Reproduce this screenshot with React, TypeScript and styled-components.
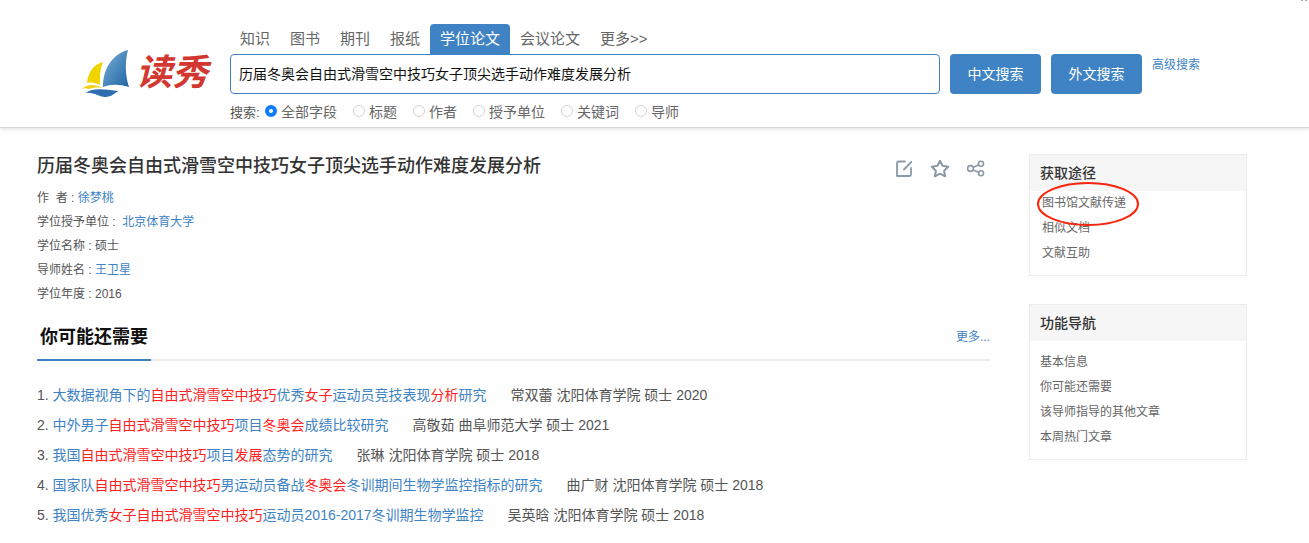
import React from "react";
import styled, { createGlobalStyle } from "styled-components";

const BLUE = "#4083c4";
const FONT = '"Liberation Sans", "Noto Sans CJK SC", sans-serif';

const GlobalStyle = createGlobalStyle`
  * { box-sizing: border-box; }
  body { margin: 0; background: #fefefe; color: #555; font-family: ${FONT}; font-size: 14px; }
  button, input { font-family: inherit; }
  h1, h2, p, ul, ol { margin: 0; padding: 0; }
  ul, ol { list-style: none; }
  a { color: inherit; text-decoration: none; }
`;

const Header = styled.header`
  position: relative;
  display: flex;
  align-items: flex-start;
  padding: 24px 109px 4px 80px;
  background: #fff;
  border-bottom: 1px solid #d6d6d6;
  box-shadow: 0 1px 4px rgba(0, 0, 0, 0.12);
`;
const ClippedMark = styled.svg`
  position: absolute;
  top: 0;
  right: 0;
`;
const Logo = styled.a`
  display: flex;
  flex: none;
  align-items: center;
  width: 150px;
  margin-top: 22px;
  color: #d2382f;
  font-size: 36px;
  font-weight: 700;
  font-style: italic;
  line-height: 54px;
`;
const Search = styled.form`
  flex: 1;
  min-width: 0;
`;
const Tabs = styled.nav`
  display: flex;
`;
const Tab = styled.a<{ $active?: boolean }>`
  padding: 0 10px;
  border-radius: 4px 4px 0 0;
  font-size: 15px;
  line-height: 30px;
  color: ${(p) => (p.$active ? "#fff" : "#666")};
  background: ${(p) => (p.$active ? BLUE : "transparent")};
`;
const SearchRow = styled.div`
  display: flex;
  gap: 10px;
`;
const SearchInput = styled.input`
  flex: 1;
  min-width: 0;
  height: 40px;
  padding: 0 8px 3px;
  border: 1px solid ${BLUE};
  border-radius: 4px;
  background: #fff;
  color: #111;
  font-size: 14px;
  outline: none;
`;
const SearchButton = styled.button`
  width: 91px;
  height: 40px;
  padding: 0 0 3px;
  border: 0;
  border-radius: 4px;
  background: ${BLUE};
  color: #fff;
  font-size: 14px;
`;
const Advanced = styled.a`
  color: ${BLUE};
  font-size: 12px;
  line-height: 22px;
`;
const Fields = styled.fieldset`
  display: flex;
  align-items: center;
  height: 24px;
  margin: 5px 0 0;
  padding: 0;
  border: 0;
`;
const FieldsLabel = styled.span`
  width: 35px;
  font-size: 13px;
`;
const FieldOption = styled.label`
  display: flex;
  align-items: center;
  gap: 4px;
  margin-right: 16px;
  color: #666;
  font-size: 14px;
`;
const Radio = styled.input`
  appearance: none;
  width: 12px;
  height: 12px;
  margin: 0;
  border: 1px solid #d2d2d2;
  border-radius: 50%;
  background: #fff;
  &:checked { border: 4px solid #0b7bff; }
`;

const Page = styled.div`
  display: grid;
  grid-template-columns: minmax(0, 1fr) 218px;
  gap: 39px;
  align-items: start;
  padding: 26px 62px 12px 37px;
`;
const TitleRow = styled.div`
  display: flex;
  align-items: center;
  justify-content: space-between;
  height: 24px;
  margin-bottom: 8px;
`;
const Title = styled.h1`
  color: #333;
  font-size: 18px;
  font-weight: 500;
  line-height: 24px;
`;
const Actions = styled.div`
  display: flex;
  gap: 16px;
  padding: 6px 4px 0 0;
`;
const IconButton = styled.button`
  display: flex;
  width: 20px;
  height: 20px;
  padding: 0;
  border: 0;
  background: none;
  color: #8d99a8;
`;
const Meta = styled.p`
  white-space: pre;
  font-size: 12px;
  line-height: 24px;
  a { color: ${BLUE}; }
`;
const SectionHead = styled.div`
  display: flex;
  justify-content: space-between;
  margin: 15px 0 19px;
  border-bottom: 2px solid #ececec;
`;
const SectionTitle = styled.h2`
  margin-bottom: -2px;
  padding: 0 3px 6px;
  border-bottom: 2px solid ${BLUE};
  color: #111;
  font-size: 18px;
  font-weight: 700;
  line-height: 32px;
`;
const More = styled.a`
  color: ${BLUE};
  font-size: 12px;
  line-height: 32px;
`;
const Result = styled.li`
  display: flex;
  gap: 24px;
  line-height: 30px;
  white-space: nowrap;
  a { color: ${BLUE}; }
  em { color: #f22; font-style: normal; }
`;

const Side = styled.aside`
  display: grid;
  gap: 28px;
`;
const Card = styled.section`
  border: 1px solid #ececec;
  background: #fff;
`;
const CardTitle = styled.h2`
  padding: 0 10px;
  background: #f6f6f6;
  color: #333;
  font-size: 14px;
  font-weight: 500;
  line-height: 36px;
`;
const CardList = styled.ul<{ $compact?: boolean }>`
  padding: ${(p) => (p.$compact ? "0 12px 9px" : "9px 10px 9px")};
  color: #666;
  font-size: 12px;
  line-height: 25px;
`;
const Circled = styled.a`
  position: relative;
  svg { position: absolute; left: -6px; top: -15px; pointer-events: none; }
`;

const Sailboat = () => (
  <svg width="56" height="54" viewBox="0 0 56 54" aria-hidden="true">
    <defs>
      <linearGradient id="sail" x1="0" y1="0" x2="1" y2="1">
        <stop offset="0" stopColor="#7db0d6" />
        <stop offset="1" stopColor="#1d64a4" />
      </linearGradient>
    </defs>
    <path d="M23 16C15 18 8 25 7 37c4-1 9 0 13 2 0-9 0-16 3-23z" fill="#f0d400" />
    <path d="M48 4C33 8 23 22 23 41c8-3 16-3 26 0C45 29 45 15 48 4z" fill="url(#sail)" />
    <path d="M2 43c5-5 12-5 21-1-6-1-11 0-14 1-3-1-5-1-7 0z" fill="#ecd21a" />
    <path d="M5 47c10-6 19-3 34-2-5 2-7 6-14 6-7 0-10-5-20-4z" fill="#2f6fb0" />
  </svg>
);

const stroke = { fill: "none", stroke: "currentColor", strokeWidth: 1.8, strokeLinecap: "round", strokeLinejoin: "round" } as const;
const EditIcon = () => (
  <svg width="20" height="20" viewBox="0 0 20 20" {...stroke}>
    <path d="M11 2.500H5Q3 2.500 3 4.500V17H15Q17 17 17 15V9M10 10.500L17.300 3" />
  </svg>
);
const StarIcon = () => (
  <svg width="20" height="20" viewBox="0 0 20 20" {...stroke} strokeWidth={2}>
    <path d="M10 1.800l2.500 5 5.700.9-4.100 4 1 5.600-5.100-2.600-5.100 2.600 1-5.600-4.100-4 5.700-.9z" />
  </svg>
);
const ShareIcon = () => (
  <svg width="20" height="20" viewBox="0 0 20 20" {...stroke} strokeWidth={1.6}>
    <circle cx="4.500" cy="9.500" r="2.900" />
    <circle cx="15" cy="4.800" r="2.500" />
    <circle cx="15" cy="14.200" r="2.500" />
    <path d="M7.200 8.300l5.400-2.400M7 11l5.600 2.300" />
  </svg>
);

const tabs = ["知识", "图书", "期刊", "报纸", "学位论文", "会议论文", "更多>>"];
const fields = ["全部字段", "标题", "作者", "授予单位", "关键词", "导师"];

/* Segments wrapped in asterisks are the matched keywords. */
const results = [
  ["大数据视角下的*自由式滑雪空中技巧*优秀*女子*运动员竞技表现*分析*研究", "常双蕾 沈阳体育学院 硕士 2020"],
  ["中外男子*自由式滑雪空中技巧*项目*冬奥会*成绩比较研究", "高敬茹 曲阜师范大学 硕士 2021"],
  ["我国*自由式滑雪空中技巧*项目*发展*态势的研究", "张琳 沈阳体育学院 硕士 2018"],
  ["国家队*自由式滑雪空中技巧*男运动员备战*冬奥会*冬训期间生物学监控指标的研究", "曲广财 沈阳体育学院 硕士 2018"],
  ["我国优秀*女子自由式滑雪空中技巧*运动员2016-2017冬训期生物学监控", "吴英晗 沈阳体育学院 硕士 2018"],
];
const navItems = ["基本信息", "你可能还需要", "该导师指导的其他文章", "本周热门文章"];

const Highlighted = ({ text }: { text: string }) => (
  <a href="#">{text.split("*").map((part, i) => (i % 2 ? <em key={i}>{part}</em> : part))}</a>
);

export default function App() {
  return (
    <>
      <GlobalStyle />
      <Header>
        <ClippedMark width="9" height="2" viewBox="0 0 9 2" aria-hidden="true">
          <path d="M1 0h2v1H1zM5 0h2v1H5z" fill="#aaa" />
        </ClippedMark>
        <Logo href="#"><Sailboat />读秀</Logo>
        <Search onSubmit={(e) => e.preventDefault()}>
          <Tabs>
            {tabs.map((t) => <Tab key={t} href="#" $active={t === "学位论文"}>{t}</Tab>)}
          </Tabs>
          <SearchRow>
            <SearchInput aria-label="搜索" defaultValue="历届冬奥会自由式滑雪空中技巧女子顶尖选手动作难度发展分析" />
            <SearchButton type="submit">中文搜索</SearchButton>
            <SearchButton type="button">外文搜索</SearchButton>
            <Advanced href="#">高级搜索</Advanced>
          </SearchRow>
          <Fields>
            <FieldsLabel>搜索:</FieldsLabel>
            {fields.map((f, i) => (
              <FieldOption key={f}>
                <Radio type="radio" name="field" defaultChecked={i === 0} />
                {f}
              </FieldOption>
            ))}
          </Fields>
        </Search>
      </Header>
      <Page>
        <main>
          <TitleRow>
            <Title>历届冬奥会自由式滑雪空中技巧女子顶尖选手动作难度发展分析</Title>
            <Actions>
              <IconButton aria-label="编辑"><EditIcon /></IconButton>
              <IconButton aria-label="收藏"><StarIcon /></IconButton>
              <IconButton aria-label="分享"><ShareIcon /></IconButton>
            </Actions>
          </TitleRow>
          <Meta>作  者 : <a href="#">徐梦桃</a></Meta>
          <Meta>学位授予单位 :  <a href="#">北京体育大学</a></Meta>
          <Meta>学位名称 : 硕士</Meta>
          <Meta>导师姓名 : <a href="#">王卫星</a></Meta>
          <Meta>学位年度 : 2016</Meta>
          <SectionHead>
            <SectionTitle>你可能还需要</SectionTitle>
            <More href="#">更多...</More>
          </SectionHead>
          <ol>
            {results.map(([title, source], i) => (
              <Result key={title}>
                <span>{i + 1}. <Highlighted text={title} /></span>
                <span>{source}</span>
              </Result>
            ))}
          </ol>
        </main>
        <Side>
          <Card>
            <CardTitle>获取途径</CardTitle>
            <CardList $compact>
              <li>
                <Circled href="#">
                  图书馆文献传递
                  <svg width="104" height="46" viewBox="0 0 104 46" aria-hidden="true">
                    <ellipse cx="52" cy="23" rx="50" ry="21" fill="none" stroke="#f8240c" strokeWidth="2" />
                  </svg>
                </Circled>
              </li>
              <li><a href="#">相似文档</a></li>
              <li><a href="#">文献互助</a></li>
            </CardList>
          </Card>
          <Card>
            <CardTitle>功能导航</CardTitle>
            <CardList>
              {navItems.map((n) => <li key={n}><a href="#">{n}</a></li>)}
            </CardList>
          </Card>
        </Side>
      </Page>
    </>
  );
}
